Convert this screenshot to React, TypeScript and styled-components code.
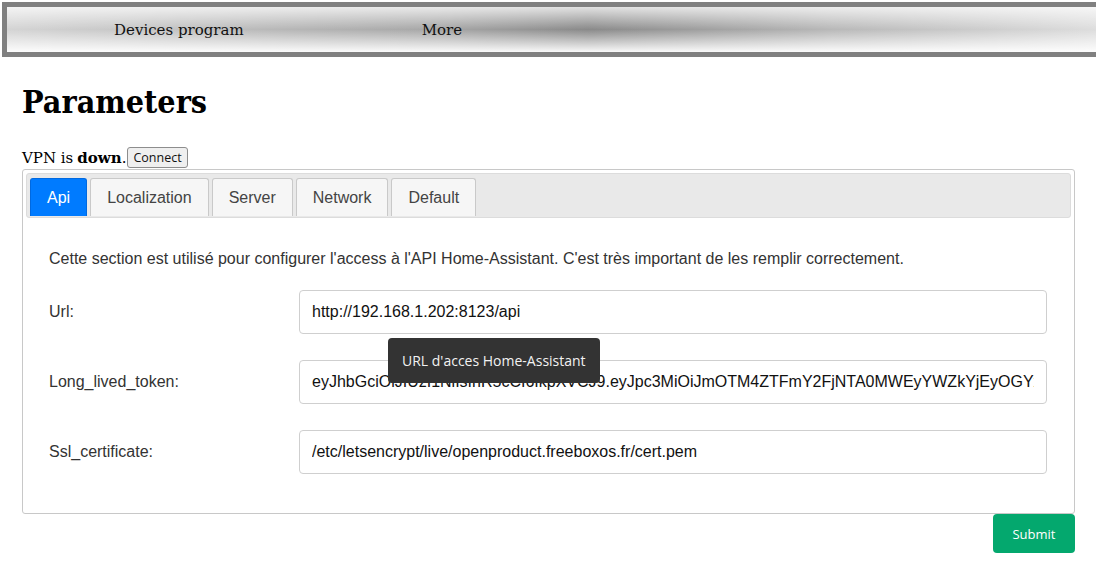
import React from "react";
import styled, { createGlobalStyle } from "styled-components";

const GlobalStyle = createGlobalStyle`
  html, body {
    margin: 0;
    padding: 0;
    overflow-x: hidden;
    background: #ffffff;
    font-family: "DejaVu Serif", serif;
    color: #000;
  }
`;

const tabs = ["Api", "Localization", "Server", "Network", "Default"];

const fields = [
  { name: "Url", value: "http://192.168.1.202:8123/api", tip: "URL d'acces Home-Assistant" },
  {
    name: "Long_lived_token",
    value:
      "eyJhbGciOiJIUzI1NiIsInR5cCI6IkpXVCJ9.eyJpc3MiOiJmOTM4ZTFmY2FjNTA0MWEyYWZkYjEyOGYxNDU2MzYyNCIsImlhdCI6MTU5MTk3NjI1N30",
  },
  { name: "Ssl_certificate", value: "/etc/letsencrypt/live/openproduct.freeboxos.fr/cert.pem" },
];

function App() {
  return (
    <>
      <GlobalStyle />
      <NavBar>
        <NavItem $offset={107}>Devices program</NavItem>
        <NavItem $offset={178}>More</NavItem>
      </NavBar>
      <Main>
        <Title>Parameters</Title>
        <VpnLine>
          VPN is <b>down</b>.<ConnectButton>Connect</ConnectButton>
        </VpnLine>
        <Panel>
          <TabBar>
            {tabs.map((t, i) => (
              <Tab key={t} $active={i === 0}>
                {t}
              </Tab>
            ))}
          </TabBar>
          <Content>
            <Intro>
              Cette section est utilisé pour configurer l'access à l'API Home-Assistant. C'est très important de les
              remplir correctement.
            </Intro>
            {fields.map((f) => (
              <Row key={f.name}>
                <Label>{f.name}:</Label>
                <InputWrap>
                  <Input defaultValue={f.value} readOnly />
                  {f.tip && <Tooltip>{f.tip}</Tooltip>}
                </InputWrap>
              </Row>
            ))}
          </Content>
        </Panel>
        <Actions>
          <SubmitButton>Submit</SubmitButton>
        </Actions>
      </Main>
    </>
  );
}
export default App;

const NavBar = styled.nav`
  margin: 2px 0 0 2px;
  width: 100%;
  height: 45px;
  border: 5px solid #808080;
  display: flex;
  align-items: center;
  background:
    linear-gradient(
      to bottom,
      rgba(255, 255, 255, 0.75) 0%,
      rgba(255, 255, 255, 0) 50%,
      rgba(255, 255, 255, 0.95) 100%
    ),
    linear-gradient(to right, #d4d4d4 0%, #a6a6a6 40%, #8a8a8a 53%, #b8b8b8 75%, #dedede 100%);
`;

const NavItem = styled.div<{ $offset: number }>`
  margin-left: ${(p) => p.$offset}px;
  font-size: 15px;
  color: #111;
`;

const Main = styled.main`
  padding: 0 21px 0 22px;
`;

const Title = styled.h1`
  margin: 26px 0 26px;
  font-family: "DejaVu Serif Condensed", "DejaVu Serif", serif;
  font-size: 32px;
  font-weight: 700;
  line-height: 38px;
`;

const VpnLine = styled.div`
  font-size: 15px;
  line-height: 22px;
  display: flex;
  align-items: flex-end;
  b {
    margin-left: 4px;
  }
`;

const ConnectButton = styled.button`
  margin: 0 0 1px 1px;
  padding: 1px 5px;
  height: 21px;
  font-family: "Open Sans", sans-serif;
  font-size: 12.5px;
  color: #111;
  background: #efefef;
  border: 1px solid #8d8d8d;
  border-radius: 3px;
`;

const Panel = styled.div`
  border: 1px solid #c8c8c8;
  border-radius: 3px;
  padding: 3px;
`;

const TabBar = styled.div`
  display: flex;
  gap: 3px;
  padding: 4px 3px 0;
  height: 39px;
  background: #e9e9e9;
  border: 1px solid #dcdcdc;
  border-radius: 3px;
`;

const Tab = styled.div<{ $active?: boolean }>`
  display: flex;
  align-items: center;
  padding: 0 16px;
  height: 38px;
  box-sizing: border-box;
  font-family: "Liberation Sans", Arial, sans-serif;
  font-size: 16px;
  color: ${(p) => (p.$active ? "#ffffff" : "#444")};
  background: ${(p) => (p.$active ? "#007bff" : "#f6f6f6")};
  border: 1px solid ${(p) => (p.$active ? "#0069e0" : "#c9c9c9")};
  border-bottom: none;
  border-radius: 3px 3px 0 0;
`;

const Content = styled.div`
  padding: 31px 24px 36px 23px;
  font-family: "Liberation Sans", Arial, sans-serif;
  color: #333;
`;

const Intro = styled.p`
  margin: 0 0 21px;
  font-size: 16px;
  line-height: 20px;
`;

const Row = styled.div`
  display: grid;
  grid-template-columns: 250px 1fr;
  align-items: center;
  margin-top: 26px;
  &:first-of-type {
    margin-top: 0;
  }
`;

const Label = styled.label`
  font-size: 16px;
`;

const InputWrap = styled.div`
  position: relative;
`;

const Input = styled.input`
  display: block;
  width: 100%;
  height: 44px;
  box-sizing: border-box;
  padding: 0 12px;
  font-family: "Liberation Sans", Arial, sans-serif;
  font-size: 16px;
  color: #111;
  border: 1px solid #cfcfcf;
  border-radius: 4px;
  outline: none;
`;

const Tooltip = styled.div`
  position: absolute;
  left: 89px;
  top: calc(100% + 4px);
  z-index: 2;
  padding: 0 14px;
  height: 45px;
  display: flex;
  align-items: center;
  background: #333333;
  color: #f2f2f2;
  border-radius: 4px;
  font-family: "Open Sans", sans-serif;
  font-size: 14px;
  white-space: nowrap;
`;

const Actions = styled.div`
  display: flex;
  justify-content: flex-end;
`;

const SubmitButton = styled.button`
  width: 82px;
  height: 39px;
  border: none;
  border-radius: 4px;
  background: #04a86e;
  color: #ffffff;
  font-family: "Open Sans", sans-serif;
  font-size: 13px;
`;
